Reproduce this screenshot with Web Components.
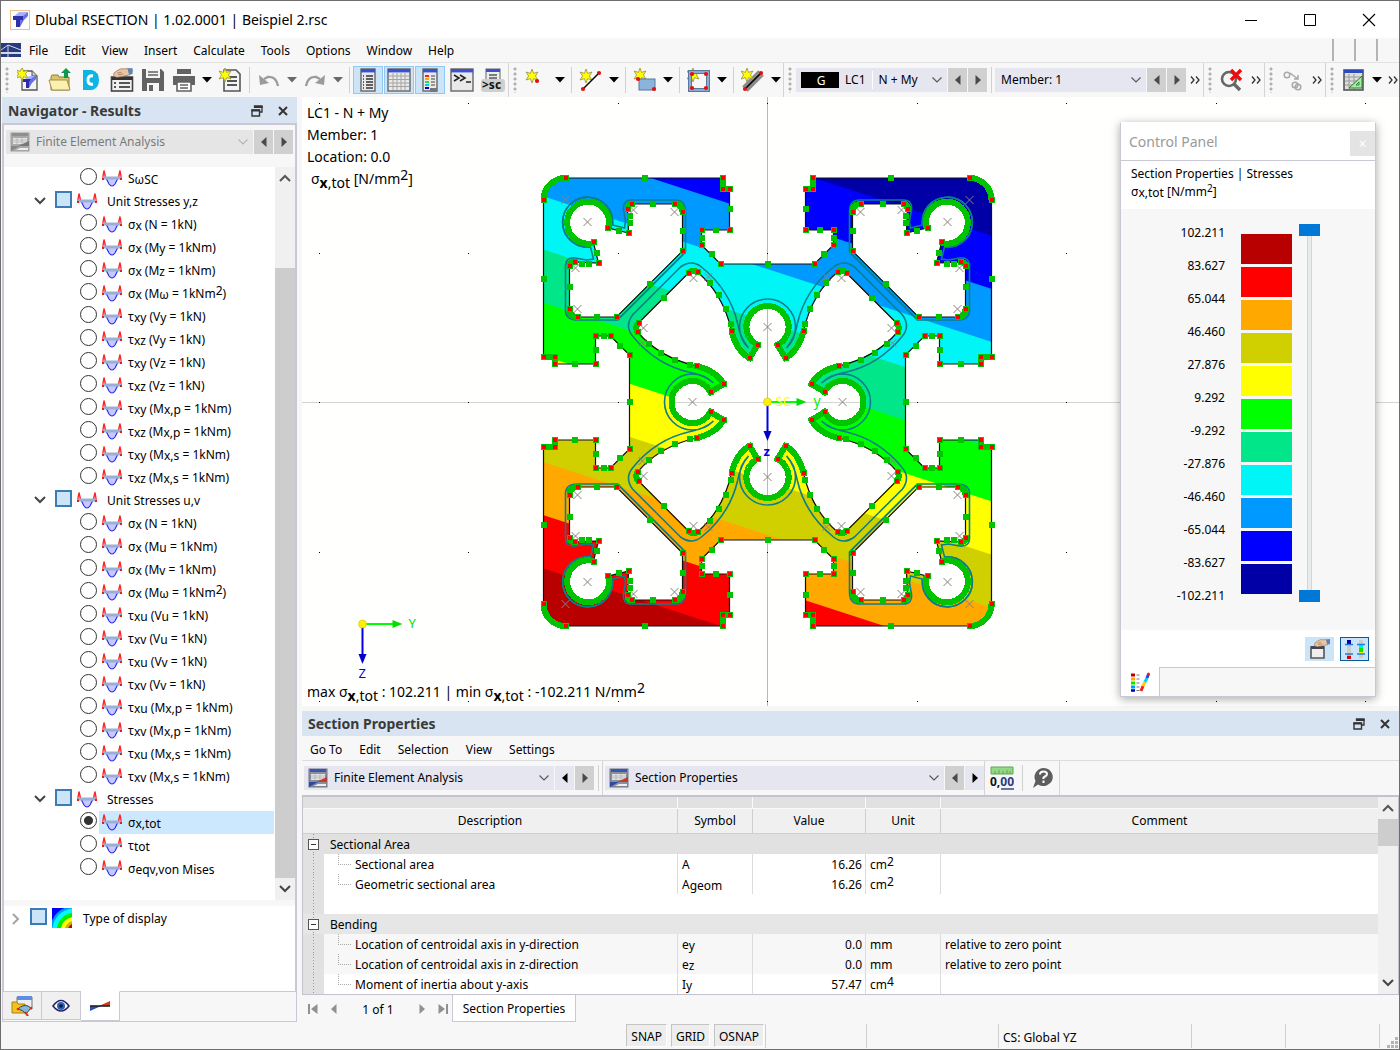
<!DOCTYPE html>
<html lang="en">
<head>
<meta charset="utf-8">
<title>Dlubal RSECTION</title>
<style>
html, body { margin: 0; height: 100%; }
body { font: 12px/16px "Noto Sans", "Open Sans", sans-serif; color: #000; background: #f7f7f7; }
</style>
</head>
<body>
<app-window></app-window>
<script>
const BASE = `
*, *::before { box-sizing: border-box; }
button, select, input { font: inherit; color: inherit; margin: 0; }
button { background: none; border: 0; padding: 0; white-space: nowrap; }
sub, sup { font-size: 12px; line-height: 0; }
sub { vertical-align: -2px; }
sup { vertical-align: 3px; }
`;
function define(name, css, render) {
  customElements.define(name, class extends HTMLElement {
    connectedCallback() {
      if (this.shadowRoot) return;
      const root = this.attachShadow({ mode: 'open' });
      root.innerHTML = `<style>${BASE}${css}</style>` + render(this);
    }
  });
}

/* ---------- icons ---------- */
const STAR = (x, y) => `<path transform="translate(${x} ${y})" d="M0-7 1.6-2.6 6-4 3.4 0 6 4 1.6 2.6 0 7-1.6 2.6-6 4-3.4 0-6-4-1.6-2.6z" fill="#ff0" stroke="#a09a4a" stroke-width=".9"/>`;
const DOT = (x, y) => `<circle cx="${x}" cy="${y}" r="2.1" fill="#e80c0c"/>`;
const PAGE = `<path d="M5 3h10l5 5v14H5z" fill="#f4f4f4" stroke="#555" stroke-width="1.3"/><path d="M15 3v5h5" fill="#ccc" stroke="#555"/>`;
const WIN = (x, w) => `<rect x="${x}" y="1" width="${w}" height="22" fill="#e9e9e9" stroke="#666" stroke-width="1.4"/><rect x="${x}" y="1" width="${w}" height="3.4" fill="#3d50cf"/>`;
const HAND = `<path d="M1 10V6l4-3 4-2h6l4-1 4 3-3 5-5 1-4 1-6 1z" fill="#e9c5a4" stroke="#8d6a50" stroke-width=".8"/><path d="M5 6l5-1M6 8l6-1" stroke="#8d6a50" stroke-width=".8"/><path d="M17 1l6-1v7l-4 1z" fill="#5c84b8"/>`;
const FEA = g => `<rect x="1" y="1" width="18" height="18" fill="${g ? '#a9a9a9' : '#8a8f9a'}" stroke="${g ? '#a0a0a0' : '#707684'}"/><rect x="2" y="1" width="16" height="3" fill="${g ? '#8f8f8f' : '#3956b5'}"/><path d="M3 6h14v6H3z" fill="#e6e6e6"/><path d="M3 8h14M3 10h14M7 6v6M12 6v6" stroke="#aaa" stroke-width=".7"/><path d="M8 14l11-5v5z" fill="${g ? '#777' : '#c63a2c'}"/><path d="M1 14h9l-9 5z" fill="${g ? '#888' : '#2d49a8'}"/><path d="M10 16h8v2H6z" fill="#eee"/>`;
const ICONS = {
  app: [20, 20, `<rect x=".5" y=".5" width="19" height="19" fill="#fff" stroke="#efc08a"/><path d="M3 7h11l4-5H9z" fill="#aab0ff"/><path d="M3 6h10v4h-3v7H6v-7H3z" fill="#2f31a8"/><path d="M13 6l5-4v4l-4 4h-1zM10 10h4l-4 7z" fill="#6c72e6"/>`],
  mdi: [20, 14, `<path d="M0 0h20v14H0z" fill="#273a7c"/><path d="M0 10h20" stroke="#fff" stroke-width="1.6"/><path d="M0 7l7-5 13 5M7 2v12" stroke="#cfd6ef" fill="none"/>`],
  min: [12, 12, `<path d="M0 6.5h12" stroke="#000"/>`],
  max: [12, 12, `<path d="M.5.5h11v11H.5z" fill="none" stroke="#000"/>`],
  close: [14, 14, `<path d="M1 1l12 12M13 1L1 13" stroke="#000" stroke-width="1.1"/>`],
  restore: [12, 12, `<path d="M3.5 2.5V1h7.5v6H9" fill="none" stroke="#333" stroke-width="1.3"/><path d="M3 1h8.6v2H3z" fill="#333"/><path d="M1 5h7.5v6H1z" fill="none" stroke="#333" stroke-width="1.4"/><path d="M.4 4.5h8.7v2H.4z" fill="#333"/>`],
  x: [10, 10, `<path d="M1 1l8 8M9 1L1 9" stroke="#333" stroke-width="2"/>`],
  new: [24, 24, PAGE + STAR(5, 6) + `<path d="M6 12h8l5-4h-6z" fill="#a7adff"/><path d="M6 11h8v3h-2v6H9v-6H6z" fill="#2b2da6"/><path d="M14 11l5-4v4l-4 4-3 5v-6z" fill="#6a70e4"/>`],
  open: [24, 24, `<path d="M3 9l1-2h6l1 2h10v13H3z" fill="#d9c46a" stroke="#8d7f3a"/><path d="M1 12h18l3 10H4z" fill="#faf0b0" stroke="#a3924a"/><path d="M18 0l5 5h-3v5h-4V5h-3z" fill="#0a9a50"/>`],
  center: [20, 22, `<path d="M2 1h9q7 2 7 10t-7 10H2z" fill="#0cb5e6"/><path d="M12 7q-5-1-5 4t5 4" fill="none" stroke="#fff" stroke-width="3"/>`],
  props: [24, 24, `<rect x="1.500" y="9" width="21" height="14" fill="#f0f0f0" stroke="#444" stroke-width="1.6"/><path d="M2 9h20v3H2z" fill="#333"/><path d="M4 15h2M4 19h2M9 15h11M9 19h11" stroke="#555" stroke-width="2"/><g transform="translate(3 0)scale(.85)">${HAND}</g>`],
  save: [24, 24, `<path d="M1 1h19l3 3v19H1z" fill="#626262"/><path d="M5 1h14v9H5z" fill="#f5f5f5"/><path d="M7 4h10M7 7h10" stroke="#626262" stroke-width="1.6"/><path d="M6 15h12v8H6z" fill="#f5f5f5"/><path d="M8 17h4v6H8z" fill="#626262"/>`],
  print: [24, 24, `<path d="M5 1h14v5H5zM1 8h22v9h-4v-3H5v3H1z" fill="#626262"/><path d="M5 14h14v9H5z" fill="#fff" stroke="#626262" stroke-width="1.6"/><path d="M8 17h8M8 20h8" stroke="#626262" stroke-width="1.4"/>`],
  report: [24, 24, `<path d="M6 2h12l4 4v17H6z" fill="#f4f4f4" stroke="#555" stroke-width="1.6"/><path d="M9 9h10M9 13h10M9 17h10" stroke="#555" stroke-width="1.8"/>` + STAR(7, 7)],
  undo: [22, 16, `<path d="M20 14Q18 4 10 5L6 7" fill="none" stroke="#9b9b9b" stroke-width="2.4"/><path d="M1 3l1 10 9-2z" fill="#9b9b9b"/>`],
  redo: [22, 16, `<path d="M2 14Q4 4 12 5l4 2" fill="none" stroke="#9b9b9b" stroke-width="2.4"/><path d="M21 3l-1 10-9-2z" fill="#9b9b9b"/>`],
  nav: [24, 24, WIN(5, 14) + `<path d="M10 8h7M10 11h7M10 14h7M10 17h7M10 20h7" stroke="#333" stroke-width="1.4"/><path d="M7 8h1M7 11h1M7 14h1M7 17h1M7 20h1" stroke="#333" stroke-width="1.4"/>`],
  table: [24, 24, WIN(1, 22) + `<path d="M2 8h20M2 11.500h20M2 15h20M2 18.500h20M6 5v17M10 5v17M14 5v17M18 5v17" stroke="#a4a4a4"/>`],
  panel: [24, 24, WIN(5, 14) + `<path d="M7 8h4" stroke="#e22" stroke-width="2"/><path d="M7 11h4" stroke="#fa0" stroke-width="2"/><path d="M7 14h4" stroke="#3d3" stroke-width="2"/><path d="M7 17h4" stroke="#0cf" stroke-width="2"/><path d="M7 20h4" stroke="#00b" stroke-width="2"/><path d="M13 8h4M13 11h4M13 14h4M13 17h4" stroke="#444"/><path d="M12 20h7v4h-7z" fill="#777"/>`],
  console: [24, 24, WIN(1, 22) + `<path d="M4 7l5 3-5 3M10 7l5 3-5 3M16 14h5" fill="none" stroke="#222" stroke-width="1.6"/>`],
  script: [24, 24, `<rect x="5" y="1" width="14" height="12" fill="#eee" stroke="#666"/><rect x="5" y="1" width="14" height="3" fill="#3d50cf"/><path d="M8 7h8M8 10h8" stroke="#555" stroke-width="1.4"/><rect x="0" y="11" width="24" height="13" rx="3" fill="#cfcfcf"/><text x="1" y="21" font-size="12" font-weight="bold" font-family="Noto Sans" fill="#111">&gt;sc</text>`],
  point: [24, 24, STAR(7, 8) + DOT(12, 13)],
  line: [24, 24, STAR(7, 8) + `<path d="M4 21L20 5" stroke="#000" stroke-width="1.4"/>` + DOT(4, 21) + DOT(20, 5)],
  surface: [24, 24, STAR(7, 7) + `<rect x="6" y="11" width="16" height="11" fill="#8ab4dc" stroke="#56789c"/>` + DOT(5, 11) + DOT(21, 21)],
  opening: [24, 24, STAR(6, 7) + `<path d="M3 4h18v18H3z" fill="none" stroke="#56789c" stroke-width="4"/><path d="M3 4h18v18H3z" fill="none" stroke="#9bbcdf" stroke-width="1.6"/>` + DOT(5, 6) + DOT(19, 6) + DOT(5, 20) + DOT(19, 20)],
  element: [24, 24, `<path d="M4 21L20 5" stroke="#8a8a8a" stroke-width="8"/>` + STAR(6, 7) + `<path d="M4 21L20 5" stroke="#000" stroke-width="1.6"/>` + DOT(4, 21) + DOT(20, 5)],
  find: [24, 24, `<circle cx="9" cy="11" r="7" fill="none" stroke="#666" stroke-width="2.6"/><path d="M14 16l6 6" stroke="#666" stroke-width="3.4"/><path d="M11 2l10 10M21 2L11 12" stroke="#f00a0a" stroke-width="3.4"/>`],
  snap: [24, 24, `<g fill="none" stroke="#a9a9a9" stroke-width="1.5"><circle cx="6" cy="7" r="2.800"/><circle cx="14" cy="17" r="2.800"/><circle cx="17" cy="19" r="2.800"/><path d="M9 5l8 6M17 7v4h-4"/></g>`],
  calc: [24, 24, `<rect x="2" y="2" width="19" height="20" fill="#ddd" stroke="#555" stroke-width="1.6"/><path d="M2 2h19v3H2z" fill="#2b4bb8"/><path d="M3 9h17M3 13h17M3 17h17M7 6v15M12 6v15" stroke="#999"/><path d="M7 20L20 8v12z" fill="#9ff09f" stroke="#357a35"/><path d="M14 17l3-3v3z" fill="#f5fff5" stroke="#357a35"/>`],
  caret: [10, 6, `<path d="M0 0h10L5 5.500z"/>`],
  caretg: [10, 6, `<path d="M0 0h10L5 5.500z" fill="#6a6a6a"/>`],
  left: [6, 10, `<path d="M5.500 0v10L0 5z" fill="currentColor"/>`],
  right: [6, 10, `<path d="M.5 0v10L6 5z" fill="currentColor"/>`],
  first: [10, 10, `<path d="M0 0h2v10H0zM9.500 0v10L3 5z" fill="#909090"/>`],
  last: [10, 10, `<path d="M8 0h2v10H8zM.5 0v10L7 5z" fill="#909090"/>`],
  more: [10, 8, `<path d="M1 .5L4 4 1 7.500M6 .5L9 4 6 7.500" fill="none" stroke="#333" stroke-width="1.3"/>`],
  down: [10, 6, `<path d="M.5.5L5 5 9.500.5" fill="none" stroke="currentColor" stroke-width="1.1"/>`],
  tdown: [12, 8, `<path d="M1 1l5 5 5-5" fill="none" stroke="#444" stroke-width="2"/>`],
  tup: [12, 8, `<path d="M1 7l5-5 5 5" fill="none" stroke="#555" stroke-width="2"/>`],
  tright: [8, 12, `<path d="M1 1l5 5-5 5" fill="none" stroke="#a4a4a4" stroke-width="2"/>`],
  fea: [20, 20, FEA(false)],
  feag: [20, 20, FEA(true)],
  stress: [20, 18, `<path d="M3 8h14l-3 4-2 4-2 1-2-1-2-4z" fill="#c6c8ff"/><path d="M4.500 10l2.500 5q3 4 6 0l2.500-5" fill="none" stroke="#2a2af0" stroke-width="1.200"/><path d="M1 9V7L2 1.500 3.500 8M19 9V7l-1-5.500L16.500 8" fill="#ffb0b0" stroke="#f22" stroke-width="1.3"/><path d="M1 9h18" stroke="#98b0d4" stroke-width="3"/><path d="M0 10h2M18 10h2" stroke="#e02020" stroke-width="2"/>`],
  display: [20, 20, `<path d="M0 0h20v20H0z" fill="#00f"/><circle cx="22" cy="22" r="24" fill="#0099ff"/><circle cx="22" cy="22" r="21.500" fill="#00f8f8"/><circle cx="22" cy="22" r="17" fill="#0e0"/><circle cx="22" cy="22" r="13" fill="#ff0"/><circle cx="22" cy="22" r="9" fill="#d0b000"/><circle cx="22" cy="22" r="6" fill="#c00"/>`],
  data: [22, 20, `<path d="M6 1h15v12H6z" fill="#eee" stroke="#777"/><path d="M6 0h15v4H6z" fill="#5b8de6"/><path d="M1 6h5l1 2h7v9H1z" fill="#f3c21c" stroke="#a98310"/><path d="M7 13q5-5 10-3l3 2-5 6q-3-4-8-5z" fill="#7fb8dc" stroke="#345"/><path d="M14 16l3 4" stroke="#e02a10" stroke-width="2"/><circle cx="7" cy="13" r="1.300" fill="#e02a10"/><circle cx="20" cy="12" r="1.300" fill="#e02a10"/>`],
  eye: [18, 14, `<path d="M1 7q8-11 16 0-8 10-16 0z" fill="#fff" stroke="#26225e" stroke-width="1.6"/><circle cx="9" cy="7" r="4" fill="#2c60b8"/><circle cx="9" cy="7" r="1.800" fill="#0b1440"/>`],
  result: [20, 10, `<path d="M0 5h11L0 10z" fill="#2a4cb4"/><path d="M20 5H9l11-5z" fill="#d33a1c"/><path d="M0 5h20" stroke="#222" stroke-width="1.6"/>`],
  decimals: [24, 24, `<path d="M1 1h22v7H1z" fill="#94d886" stroke="#62a556"/><path d="M5 8V5M9 8V4M13 8V5M17 8V4M20 8V5" stroke="#62a556"/><text x="0" y="20" font-size="12" font-weight="bold" font-family="Noto Sans" fill="#111">0,<tspan fill="#2b3a80">00</tspan></text><path d="M11 23h13" stroke="#2b3a80" stroke-width="1.4"/>`],
  help: [22, 22, `<path d="M11 1a9.500 9 0 11-5 16.500L1 21l2.500-7A9.500 9 0 0111 1z" fill="#5d5d5d"/><path d="M8 7.500q0-3 3.500-3t3.500 2.500q0 1.500-2 2.500t-1.500 2.500M11.500 13.500v2.500" fill="none" stroke="#fff" stroke-width="2"/>`],
  phand: [20, 20, `<path d="M1 8h13v11H1z" fill="#eee" stroke="#555" stroke-width="1.6"/><path d="M1 7h13v3H1z" fill="#445"/><g transform="translate(4 0)scale(.7)">${HAND}</g>`],
  ranges: [20, 20, `<path d="M2 1h4v18H2zM14 1h4v18h-4z" fill="#ccc"/><path d="M2 1h4v4H2z" fill="#00a"/><path d="M2 15h4v2H2z" fill="#fa0"/><path d="M2 17h4v3H2z" fill="#d00"/><path d="M14 6h4v3h-4z" fill="#00f0f0"/><path d="M14 9h4v4h-4z" fill="#0e0"/><path d="M14 13h4v2h-4z" fill="#ee0"/><path d="M0 5.500h8M0 15h8M12 5.500h8M12 15h8" stroke="#1a80e0" stroke-width="1.4"/>`],
  colors: [20, 20, `<path d="M1 3h4" stroke="#b00" stroke-width="3"/><path d="M1 7h4" stroke="#fa0" stroke-width="3"/><path d="M1 11h4" stroke="#0e0" stroke-width="3"/><path d="M1 15h4" stroke="#09f" stroke-width="3"/><path d="M1 18.500h4" stroke="#00a" stroke-width="2.500"/><path d="M6.500 3h3M6.500 7h3M6.500 11h3M6.500 15h3M6.500 18.500h3" stroke="#777"/><path d="M11 19l2-5" stroke="#e22" stroke-width="3"/><path d="M13 14l2-4" stroke="#fc0" stroke-width="3"/><path d="M15 10l2-4" stroke="#0cf" stroke-width="3"/><path d="M17 6l1.500-4" stroke="#24c" stroke-width="3"/><circle cx="18.500" cy="2" r="1.500" fill="#e22"/>`],
  grip: [12, 12, `<path d="M9 0h3v3H9zM5 4h3v3H5zM9 4h3v3H9zM1 8h3v3H1zM5 8h3v3H5zM9 8h3v3H9z" fill="#b4b4b4"/>`]
};
define('ui-icon', ':host { display: block; flex: none; } svg { display: block; overflow: hidden; }', el => {
  const [w, h, body] = ICONS[el.getAttribute('name')];
  return `<svg width="${w}" height="${h}" viewBox="0 0 ${w} ${h}" aria-hidden="true">${body}</svg>`;
});
const ico = n => `<ui-icon name="${n}"></ui-icon>`;

/* ---------- toolbar pieces ---------- */
define('tool-button', `
:host { display: block; flex: none; width: 31px; height: 28px; }
:host([kind=caret]) { width: 15px; }
:host([kind=more]) { width: 17px; }
button { width: 100%; height: 100%; display: grid; place-items: center; }
:host([active]) button { width: 30px; background: #cce4f7; border: 1px solid #90c8f6; }
`, el => `<button type="button" aria-label="${el.getAttribute('icon')}">${ico(el.getAttribute('icon'))}</button>`);
define('tool-separator', `:host { display: block; flex: none; width: 8px; height: 26px; } i { display: block; width: 1px; height: 100%; margin-left: 4px; background: #d0d0d0; }`, () => '<i></i>');
define('tool-group', `
:host { display: flex; align-items: center; height: 34px; border-right: 1px solid #d4d4d4; }
i { flex: none; width: 12px; height: 26px; background: radial-gradient(circle at 6px 2px, #b0b0b0 1px, transparent 2px) 0 0 / 12px 5px; }
`, () => '<i></i><slot></slot>');

/* Drop-down followed by the previous and next buttons */
define('step-select', `
:host { display: flex; gap: 1px; height: 24px; color: #000; min-width: 0; }
.box { flex: 1; min-width: 0; display: flex; align-items: center; background: #e6e6f1; position: relative; }
:host([off]) .box { background: #e5e5e5; color: #7a7a7a; }
::slotted(*) { flex: none; }
::slotted(ui-icon) { margin-left: 4px; }
select { appearance: none; flex: 1; min-width: 0; height: 24px; border: 0; background: none; padding: 0 22px 0 6px; opacity: 1; color: inherit; }
.chev { position: absolute; right: 5px; top: 9px; color: #555; pointer-events: none; }
:host([off]) .chev { color: #b5b5b5; }
button { flex: none; width: 19px; height: 24px; display: grid; place-items: center; background: #d0d0d0; color: #4a4a4a; }
button.on { background: #e6e6f1; color: #000; }
`, el => `<div class="box"><slot></slot><select aria-label="${el.getAttribute('label')}" ${el.hasAttribute('off') ? 'disabled' : ''}><option>${el.getAttribute('value')}</option></select><span class="chev">${ico('down')}</span></div>
<button type="button" class="${el.getAttribute('on') === 'prev' ? 'on' : ''}" aria-label="Previous">${ico('left')}</button><button type="button" class="${el.getAttribute('on') === 'next' ? 'on' : ''}" aria-label="Next">${ico('right')}</button>`);

define('panel-header', `
:host { display: flex; align-items: center; height: 26px; padding: 1px 6px 0 6px; background: #d8e4f1; color: #3a3a3a; gap: 10px; }
h2 { flex: 1; margin: 0; font-size: 14px; font-weight: 700; line-height: 20px; }
button { width: 16px; height: 20px; display: grid; place-items: center; }
`, el => `<h2><slot></slot></h2><button type="button" aria-label="Float">${ico('restore')}</button><button type="button" aria-label="Close">${ico('x')}</button>`);

define('menu-row', `
:host { display: flex; align-items: center; }
button { padding: 2px 8px 0; height: 24px; }
`, el => el.getAttribute('items').split('|').map(t => `<button type="button">${t}</button>`).join(''));

define('scroll-bar', `
:host { display: flex; flex-direction: column; width: 20px; background: #f0f0f0; }
span { flex: none; height: 22px; display: grid; place-items: center; }
i { display: block; background: #cdcdcd; height: var(--thumb); margin-top: var(--before, 0px); margin-bottom: auto; }
`, () => `<span>${ico('tup')}</span><i></i><span>${ico('tdown')}</span>`);

/* ---------- navigator ---------- */
const K = (a, s, l, ls, u) => `${a}<sub>${s}</sub> (${l}${ls ? `<sub>${ls}</sub>` : ''} = ${u})`;
const unit = (p, q) => [
  K('σ', 'x', 'N', '', '1kN'), K('σ', 'x', 'M', p, '1kNm'), K('σ', 'x', 'M', q, '1kNm'), K('σ', 'x', 'M', 'ω', '1kNm<sup>2</sup>'),
  K('τ', 'x' + p, 'V', p, '1kN'), K('τ', 'x' + q, 'V', p, '1kN'), K('τ', 'x' + p, 'V', q, '1kN'), K('τ', 'x' + q, 'V', q, '1kN'),
  K('τ', 'x' + p, 'M', 'x,p', '1kNm'), K('τ', 'x' + q, 'M', 'x,p', '1kNm'), K('τ', 'x' + p, 'M', 'x,s', '1kNm'), K('τ', 'x' + q, 'M', 'x,s', '1kNm')];
define('result-tree', `
:host { display: flex; flex-direction: column; background: #fff; overflow: hidden; }
.row { display: flex; align-items: center; height: 23px; }
.leaf { padding-left: 76px; gap: 2px; }
.group { padding: 0 0 0 30px; gap: 5px; }
.group ui-icon:first-child { margin: 0 4px 2px 0; }
.top { padding-left: 8px; gap: 5px; height: 23px; }
.top ui-icon:first-child { margin-right: 5px; }
input { appearance: none; flex: none; width: 17px; height: 17px; margin-bottom: 4px; }
input[type=radio] { border: 1px solid #333; border-radius: 50%; background: #fff; }
input[type=radio]:checked { background: radial-gradient(circle, #333 0 4px, #fff 5px); }
input[type=checkbox] { background: #cce4f7; border: 2px solid #3b7cb8; }
.cap { display: flex; align-items: center; gap: 6px; height: 23px; padding-left: 3px; flex: 1; white-space: nowrap; }
.row .cap ui-icon { margin-bottom: 2px; }
.sel { background: #cce8ff; }
.group .cap, .top .cap { padding-left: 0; }
sub { vertical-align: -1px; }
`, el => {
  const leaf = (t, on) => `<label class="row leaf"><input type="radio" name="result"${on ? ' checked' : ''}><span class="cap${on ? ' sel' : ''}">${ico('stress')}<span class="t">${t}</span></span></label>`;
  const group = t => `<label class="row group">${ico('tdown')}<input type="checkbox"><span class="cap">${ico('stress')}<span>${t}</span></span></label>`;
  if (el.hasAttribute('display')) return `<label class="row top">${ico('tright')}<input type="checkbox"><span class="cap">${ico('display')}<span>Type of display</span></span></label>`;
  return leaf('S<sub>ωSC</sub>') + group('Unit Stresses y,z') + unit('y', 'z').map(t => leaf(t)).join('') +
    group('Unit Stresses u,v') + unit('u', 'v').map(t => leaf(t)).join('') +
    group('Stresses') + leaf('σ<sub>x,tot</sub>', 1) + leaf('τ<sub>tot</sub>') + leaf('σ<sub>eqv,von Mises</sub>');
});
define('navigator-panel', `
:host { display: flex; flex-direction: column; width: 295px; flex: none; }
.frame { flex: 1; min-height: 0; display: flex; flex-direction: column; border: solid #c9c8d4; border-width: 2px 2px 0 2px; }
step-select { margin: 5px 2px 13px 2px; }
.tree { flex: 1; min-height: 0; display: flex; background: #fff; overflow: hidden; }
.tree result-tree { flex: 1; }
scroll-bar { --thumb: 612px; --before: 79px; margin-left: 1px; }
.second { background: #fff; margin-top: 6px; padding-top: 1px; height: 85px; }
.tabs { display: flex; height: 31px; border: 1px solid #c9c8d4; border-top: 0; }
.tabs button { width: 39px; height: 29px; display: grid; place-items: center; background: #f0f0f0; border: 1px solid #c9c8d4; border-left-width: 0; }
.tabs button.on { height: 30px; background: #fff; border-top-color: #fff; }
.tabs i { flex: 1; border-top: 1px solid #c9c8d4; }
`, () => `<panel-header>Navigator - Results</panel-header>
<div class="frame"><step-select off label="Analysis" value="Finite Element Analysis">${ico('feag')}</step-select>
<div class="tree"><result-tree></result-tree><scroll-bar></scroll-bar></div>
<div class="second"><result-tree display></result-tree></div></div>
<div class="tabs"><button type="button" aria-label="Data">${ico('data')}</button><button type="button" aria-label="Display">${ico('eye')}</button><button type="button" class="on" aria-label="Results">${ico('result')}</button><i></i></div>`);

/* ---------- stress plot ---------- */
const COLORS = ['#b90000', '#ff0000', '#ffa800', '#d0d000', '#ffff00', '#00ff00', '#00e688', '#00f6f6', '#0099ff', '#0000ff', '#0000a6'];
const P = (...pts) => pts;
const OUTER = [['L', -138, -47], ['L', -157, -66], ['L', -172, -66], ['L', -172, -38], ['L', -213, -38], ['L', -213, -45], ['L', -224, -45], ['L', -224, -202], ['A', 22, 0, 1, -202, -224], ['L', -45, -224], ['L', -45, -213], ['L', -38, -213], ['L', -38, -172], ['L', -66, -172], ['L', -66, -157], ['L', -47, -138], ['L', 0, -138]];
const CORNER = [['M', -174, -159], ['A', 21, 1, 1, -159, -174], ['L', -139, -169], ['L', -140, -193], ['Q', -140, -198, -136, -198], ['L', -93, -198], ['Q', -85, -198, -85, -190], ['L', -85, -151], ['L', -151, -85], ['L', -190, -85], ['Q', -198, -85, -198, -93], ['L', -198, -136], ['Q', -198, -140, -193, -140], ['L', -169, -139], ['Z']];
const CORE = [['L', -44, -18], ['C', -48, -26, -58, -33, -71, -36], ['C', -98, -42, -118, -56, -130, -70], ['Q', -133, -75, -129, -79], ['L', -79, -129], ['Q', -75, -133, -70, -130], ['C', -56, -118, -42, -98, -36, -71], ['C', -33, -58, -26, -48, -18, -44], ['L', -10, -57], ['A', 21, 1, 1, 10, -57]];
const rot = (x, y, k) => { for (; k--;) [x, y] = [-y, x]; return x + ' ' + y; };
const seg = (cmds, k) => cmds.map(c => {
  const [o, ...n] = c;
  if (o === 'A') return `A${n[0]} ${n[0]} 0 ${n[1]} ${n[2]} ${rot(n[3], n[4], k)}`;
  let s = o;
  for (let i = 0; i < n.length; i += 2) s += rot(n[i], n[i + 1], k) + ' ';
  return s;
}).join('');
const all = cmds => [0, 1, 2, 3].map(k => seg(cmds, k)).join('');
const SECTION = `M-138 0${all(OUTER)}Z${all(CORNER)}M-57 -10${all(CORE)}Z`;
const THICK = 'M-224-202A22 22 0 0 1-202-224M-45-224v11h7M-174-159A21 21 0 1 1-159-174M-140-193Q-140-198-136-198M-93-198Q-85-198-85-190M-79-129Q-75-133-70-130M-36-71C-33-58-26-48-18-44L-10-57A21 21 0 0 1-19-66';
const TEAL = 'M-177-155A25 25 0 1 1-155-177L-143-174L-142-181L-144-192Q-145-202-136-202H-92Q-82-202-82-190V-150L-150-82';
const TEAL2 = 'M-19-54Q-28-63-28-75A28 28 0 0 1 0-103M-19-54C-25-61-28-68-30-79C-36-105-50-122-66-135Q-76-143-87-135L-111-111';
const RED = P([-47, -138], [-66, -157], [-66, -172], [-38, -172], [-38, -213], [-45, -213], [-45, -224], [-202, -224], [-160, -174], [-139, -169], [-140, -193], [-136, -198], [-93, -198], [-85, -190], [-85, -151], [-79, -129], [-70, -130], [-36, -71], [-18, -44], [-10, -57]);
const GREEN = P([0, -138], [-56, -148], [-66, -164], [-52, -172], [-38, -193], [-123, -224], [-115, -198], [-138, -186], [-138, -179], [-149, -171], [-85, -171], [-118, -118], [-104, -104], [-58, -119], [-49, -107], [-42, -93], [-37, -78]);
const CROSS = P([-180, -180], [0, -75], [-93, -190], [-134, -192], [-74, -124], [-202, -202], [-59, -125]);
const eight = pts => {
  const seen = new Map();
  for (const [x, y] of pts) for (const [a, b] of [[x, y], [y, x]]) for (const s of [1, -1]) for (const t of [1, -1]) seen.set([a * s + 0, b * t + 0].join(), [a * s, b * t]);
  return [...seen.values()];
};
const DIHEDRAL = [0, 90, 180, 270].flatMap(r => [`rotate(${r})`, `rotate(${r}) matrix(0 1 1 0 0 0)`]);

define('stress-view', `
:host { display: block; position: relative; flex: 1; min-height: 0; background: #fffffd; overflow: hidden; font-size: 14px; }
svg { display: block; width: 100%; height: 100%; }
.over { position: absolute; left: 5px; white-space: nowrap; }
.head { top: 5px; line-height: 22px; }
.foot { bottom: 3px; line-height: 22px; }
.head div:last-child { padding-left: 4px; }
sub, sup { font-size: 14px; }
sub { vertical-align: -4px; }
sup { vertical-align: 4px; }
.ax { font-size: 13px; }
`, () => {
  const step = 53.15, lim = i => i === 0 ? 400 : (5.5 - i) * step, k = 0.325;
  const bands = COLORS.map((c, i) => { const a = lim(i); return `<path fill="${c}" d="M-240 ${a - 240 * k}L240 ${a + 240 * k}V-400H-240Z"/>`; }).join('');
  let dots = '';
  for (let i = -3; i < 5; i++) for (let j = -2; j < 3; j++) dots += `<path d="M${Math.round(i * 149.5) - .5} ${Math.round(j * 149.5)}h1v1h-1z"/>`;
  const axes = (l, s) => `<path d="M0 0h${l - 8}" stroke="#00ff00" stroke-width="2"/><path d="M${l} 0l-10-4v8z" fill="#00e000"/><path d="M0 0v${l - 8}" stroke="#0000e8" stroke-width="2"/><path d="M0 ${l}l-4-10h8z" fill="#0000c8"/><circle r="4" fill="#ffef00" stroke="#c8b800" stroke-width=".5"/>`;
  return `<svg aria-label="Stress distribution">
<defs><clipPath id="sec"><path clip-rule="evenodd" d="${SECTION}"/></clipPath></defs>
<g transform="translate(465.5 305)">
<path d="M0-400V2000" stroke="#b8b8b8"/><path d="M-900 .5H2000" stroke="#d4d4d4" stroke-width="1"/>
<g fill="#000" shape-rendering="crispEdges">${dots}</g>
<g clip-path="url(#sec)">${bands}</g>
<path d="${SECTION}" fill="none" stroke="#111" stroke-width="1.2"/>
<g stroke="#0a7f8a" stroke-width="1.6" fill="none">${DIHEDRAL.map(t => `<path transform="${t}" d="${TEAL}${TEAL2}"/>`).join('')}</g>
<path d="${eight(CROSS).map(([x, y]) => `M${x - 4} ${y - 4}l8 8m0-8l-8 8`).join('')}" stroke="#8a8080" fill="none"/>
<g stroke="#00c400" stroke-width="6" fill="none" shape-rendering="crispEdges">${DIHEDRAL.map(t => `<path transform="${t}" d="${THICK}M-19-66A21 21 0 0 1 0-96"/>`).join('')}</g>
<g fill="#00c400" shape-rendering="crispEdges">${eight(GREEN).map(([x, y]) => `<path d="M${x - 3} ${y - 3}h6v6h-6z"/>`).join('')}</g>
<g fill="#ff0000" stroke="#00c400" shape-rendering="crispEdges">${eight(RED).map(([x, y]) => `<path d="M${x - 2.5} ${y - 2.5}h5v5h-5z"/>`).join('')}</g>
${axes(39)}
<g class="ax"><text x="8" y="4" fill="#ffff00">SC</text><text x="46" y="4" fill="#00f000" font-size="14">y</text><text x="-4" y="54" fill="#0000e8" font-weight="bold">z</text></g>
<g transform="translate(-405 222)">${axes(40)}<g class="ax"><text x="46" y="4" fill="#00e000">Y</text><text x="-4" y="54" fill="#0000e8">Z</text></g></g>
</g></svg>
<div class="over head"><div>LC1 - N + My</div><div>Member: 1</div><div>Location: 0.0</div><div>σ<sub><b>x</b>,tot</sub> [N/mm<sup>2</sup>]</div></div>
<div class="over foot">max σ<sub><b>x</b>,tot</sub> : 102.211 | min σ<sub><b>x</b>,tot</sub> : -102.211 N/mm<sup>2</sup></div>`;
});

define('control-panel', `
:host { display: flex; flex-direction: column; width: 256px; background: #fff; border: 1px solid #c9c8d4; border-top-color: #fff; box-shadow: 0 2px 9px rgba(0,0,0,.35); }
header { height: 38px; display: flex; align-items: center; justify-content: space-between; padding-left: 8px; color: #9a9a9a; font-size: 14px; border-bottom: 1px solid #c9c8d4; }
header button { width: 25px; height: 25px; margin-top: 4px; background: #e4e4e4; color: #fff; line-height: 20px; }
.name { padding: 4px 10px 8px; height: 48px; line-height: 18px; }
.name sup { font-size: 10px; vertical-align: 4px; }
.name sub { vertical-align: -1px; }
.scale { background: #f7f7f7; height: 421px; display: grid; grid-template-columns: 104px 51px 21px; gap: 0 7px; padding-top: 16px; }
ol { list-style: none; margin: 0; padding: 0; text-align: right; }
ol li { height: 33px; line-height: 16px; }
.sw { padding-top: 9px; margin-left: 9px; width: 51px; }
.sw li { border-bottom: 3px solid #f7f7f7; }
.slide { display: grid; margin: -1px 0 0 9px; height: 378px; width: 21px; background: linear-gradient(90deg, transparent 8px, #d2d6d6 8px 9px, #e8ecec 9px 12px, #d2d6d6 12px 13px, transparent 13px); }
input { grid-area: 1 / 1; appearance: none; writing-mode: vertical-lr; width: 21px; height: 378px; background: none; pointer-events: none; }
input::-webkit-slider-runnable-track { background: none; width: 21px; height: 378px; }
input::-webkit-slider-thumb { appearance: none; width: 21px; height: 12px; background: #0078d7; pointer-events: auto; }
.acts { height: 37px; display: flex; justify-content: flex-end; align-items: center; gap: 6px; padding-right: 6px; }
.acts button { width: 29px; height: 24px; display: grid; place-items: center; background: #cce4f7; }
.acts button.on { border: 1px solid #0b5a9e; }
.tabs { display: flex; height: 29px; }
.tabs button { width: 38px; display: grid; place-items: center; }
.tabs i { flex: 1; background: #f7f7f7; border: solid #c9c8d4; border-width: 1px 0 0 1px; }
`, () => `<header>Control Panel<button type="button" aria-label="Close">×</button></header>
<div class="name">Section Properties | Stresses<br>σ<sub>x,tot</sub> [N/mm<sup>2</sup>]</div>
<div class="scale"><ol>${['102.211', '83.627', '65.044', '46.460', '27.876', '9.292', '-9.292', '-27.876', '-46.460', '-65.044', '-83.627', '-102.211'].map(t => `<li>${t}</li>`).join('')}</ol>
<ol class="sw">${COLORS.map(c => `<li style="background:${c}"></li>`).join('')}</ol>
<div class="slide"><input type="range" aria-label="Upper limit" min="0" max="100" value="0"><input type="range" aria-label="Lower limit" min="0" max="100" value="100"></div></div>
<div class="acts"><button type="button" aria-label="Options">${ico('phand')}</button><button type="button" class="on" aria-label="Ranges">${ico('ranges')}</button></div>
<div class="tabs"><button type="button" aria-label="Colors">${ico('colors')}</button><i></i></div>`);

/* ---------- properties table ---------- */
define('property-table', `
:host { display: flex; height: 200px; border: 1px solid #c3c2ce; border-top-width: 2px; background: #fff; overflow: hidden; }
.wrap { flex: 1; overflow: hidden; }
table { width: 100%; table-layout: fixed; border-collapse: separate; border-spacing: 0; }
th { font-weight: 400; height: 25px; background: #f0f0f0; border-right: 1px solid #cfcfcf; border-bottom: 1px solid #cfcfcf; padding: 0; }
.strip th { height: 12px; background: #e1e1e1; border-right-color: #fafafa; border-bottom-color: #fafafa; }
th:last-child, td:last-child { border-right: 0; }
td { height: 20px; padding: 2px 4px 0; border-right: 1px solid #dcdcdc; white-space: nowrap; line-height: 16px; }
td:first-child, .g td { background: #e1e1e1; border-right: 0; }
.g2 td { background: #e6e6e6; }
td:first-child { padding: 0; background-image: repeating-linear-gradient(#999 0 1px, transparent 1px 3px); background-size: 1px 100%; background-position: 10px 0; background-repeat: no-repeat; }
.g td + td { padding-left: 6px; }
.none td { border-right: 0; }
.alt td + td { background: #f7f7f7; }
td.d { padding-left: 31px; position: relative; }
td.d::before { content: ""; position: absolute; left: 14px; top: 0; width: 13px; height: 11px; border: dotted #aaa; border-width: 0 0 1px 1px; }
td.n { text-align: right; padding-right: 3px; }
.box { display: block; width: 11px; height: 11px; margin: 0 auto 0 5px; border: 1px solid #555; background: #fff linear-gradient(#333, #333) center / 5px 1px no-repeat; }
scroll-bar { --thumb: 27px; }
sub { vertical-align: -1px; }
`, () => {
  const group = (t, c) => `<tr class="g ${c}"><td><button type="button" class="box" aria-label="Collapse"></button></td><td colspan="5">${t}</td></tr>`;
  const row = (a, b, c, d, e, k) => `<tr class="${k || ''}"><td></td><td class="d">${a}</td><td>${b}</td><td class="n">${c}</td><td>${d}</td><td>${e}</td></tr>`;
  return `<div class="wrap"><table><colgroup><col style="width:21px"><col style="width:354px"><col style="width:75px"><col style="width:113px"><col style="width:75px"><col></colgroup>
<thead><tr class="strip"><th colspan="2"></th><th></th><th></th><th></th><th></th></tr>
<tr><th colspan="2">Description</th><th>Symbol</th><th>Value</th><th>Unit</th><th>Comment</th></tr></thead>
<tbody>${group('Sectional Area', '')}${row('Sectional area', 'A', '16.26', 'cm<sup>2</sup>', '')}${row('Geometric sectional area', 'A<sub>geom</sub>', '16.26', 'cm<sup>2</sup>', '')}
<tr class="none"><td></td><td></td><td></td><td></td><td></td><td></td></tr>
${group('Bending', 'g2')}${row('Location of centroidal axis in y-direction', 'e<sub>y</sub>', '0.0', 'mm', 'relative to zero point', 'alt')}${row('Location of centroidal axis in z-direction', 'e<sub>z</sub>', '0.0', 'mm', 'relative to zero point', 'alt')}${row('Moment of inertia about y-axis', 'I<sub>y</sub>', '57.47', 'cm<sup>4</sup>', '')}</tbody></table></div><scroll-bar></scroll-bar>`;
});
define('section-properties', `
:host { display: flex; flex-direction: column; margin-top: 5px; flex: none; }
panel-header { height: 25px; }
menu-row { height: 24px; gap: 1px; padding-top: 1px; }
.bar { display: flex; align-items: center; height: 35px; border-top: 1px solid #dcdcdc; }
.bar tool-button { width: 33px; }
.c1 { width: 290px; margin-left: 2px; }
.c2 { width: 379px; margin-left: 2px; }
.edge { width: 1px; height: 34px; background: #d4d4d4; }
.foot { display: flex; align-items: stretch; height: 27px; padding-left: 1px; }
.foot button { width: 22px; display: grid; place-items: center; color: #909090; }
.foot button.wide { width: 20px; }
.foot span { width: 66px; text-align: center; line-height: 29px; }
.foot .tab { width: 124px; height: 27px; margin-left: -1px; padding-top: 2px; color: #000; background: #fff; border: solid #c9c8d4; border-width: 0 1px 1px; }
`, () => `<panel-header>Section Properties</panel-header><menu-row items="Go To|Edit|Selection|View|Settings"></menu-row>
<div class="bar"><step-select class="c1" on="prev" label="Analysis" value="Finite Element Analysis">${ico('fea')}</step-select><tool-separator></tool-separator><i class="edge"></i><step-select class="c2" on="next" label="Table" value="Section Properties">${ico('fea')}</step-select><i class="edge"></i><tool-button icon="decimals"></tool-button><tool-separator></tool-separator><tool-button icon="help"></tool-button><i class="edge"></i></div>
<property-table></property-table>
<div class="foot"><button type="button" class="wide" aria-label="First">${ico('first')}</button><button type="button" aria-label="Previous">${ico('left')}</button><span>1 of 1</span><button type="button" aria-label="Next">${ico('right')}</button><button type="button" class="wide" aria-label="Last">${ico('last')}</button><button type="button" class="tab">Section Properties</button></div>`);

define('status-bar', `
:host { display: flex; align-items: center; height: 27px; flex: none; justify-content: flex-end; }
button { height: 23px; margin-right: 4px; padding: 2px 4px 0; background: #ededed; border: 1px solid #c4c4c4; border-right-color: #fff; border-bottom-color: #fff; }
button:last-of-type { margin-right: 1px; }
div { height: 24px; line-height: 27px; padding-left: 4px; border-left: 1px solid #d0d0d0; }
.a { width: 101px; } .b { width: 132px; } .c { width: 193px; } .d { width: 94px; } .e { width: 20px; padding: 13px 0 0 6px; }
`, () => `<button type="button">SNAP</button><button type="button">GRID</button><button type="button">OSNAP</button><div class="a"></div><div class="b"></div><div class="c">CS: Global YZ</div><div class="d"></div><div class="d"></div><div class="e">${ico('grip')}</div>`);

/* ---------- window ---------- */
const tb = (n, a) => `<tool-button icon="${n}"${a ? ' active' : ''}></tool-button>`;
const car = (n = 'caret') => `<tool-button kind="caret" icon="${n}"></tool-button>`;
const sep = '<tool-separator></tool-separator>';
const more = '<tool-button kind="more" icon="more"></tool-button>';
define('app-window', `
:host { display: flex; flex-direction: column; min-height: 100vh; height: 100vh; border: 1px solid #6e6e6e; background: #f7f7f7; box-sizing: border-box; }
.title { display: flex; align-items: center; height: 37px; background: #fff; padding-left: 9px; gap: 5px; flex: none; }
.title h1 { flex: 1; margin: 0; font-size: 14px; font-weight: 400; line-height: 20px; }
.ctl { display: flex; margin-right: 1px; }
.ctl button { width: 59px; height: 36px; display: grid; place-items: center; }
.menu { display: flex; align-items: center; height: 24px; flex: none; }
.mdi { margin-left: auto; display: flex; gap: 20px; padding-right: 21px; }
.mdi i { width: 2px; height: 22px; background: #b4b4b4; }
.tools { display: flex; height: 35px; border-top: 1px solid #e2e2e2; flex: none; }
.lc, .mem { width: 191px; }
.lc b { font-weight: 400; width: 38px; height: 16px; line-height: 18px; margin-left: 5px; text-align: center; background: #000; color: #fff; padding-left: 2px; }
.lc span { padding: 0 6px; border-right: 1px solid #fff; line-height: 18px; }
.last { flex: 1; justify-content: flex-start; border-right: 0; }
.body { flex: 1; min-height: 0; display: flex; gap: 5px; padding-left: 1px; }
.main { flex: 1; min-width: 0; display: flex; flex-direction: column; }
.stage { flex: 1; min-height: 0; position: relative; display: flex; }
control-panel { position: absolute; top: 25px; right: 23px; }
`, () => `<div class="title">${ico('app')}<h1>Dlubal RSECTION | 1.02.0001 | Beispiel 2.rsc</h1><div class="ctl"><button type="button" aria-label="Minimize">${ico('min')}</button><button type="button" aria-label="Maximize">${ico('max')}</button><button type="button" aria-label="Close">${ico('close')}</button></div></div>
<div class="menu">${ico('mdi')}<menu-row items="File|Edit|View|Insert|Calculate|Tools|Options|Window|Help"></menu-row><div class="mdi"><i></i><i></i><i></i></div></div>
<div class="tools">
<tool-group>${tb('new')}${tb('open')}${tb('center')}${tb('props')}${tb('save')}${tb('print')}${car()}${tb('report')}${sep}${tb('undo')}${car('caretg')}${tb('redo')}${car('caretg')}${sep}${tb('nav', 1)}${tb('table', 1)}${tb('panel', 1)}${tb('console')}${tb('script')}</tool-group>
<tool-group>${['point', 'line', 'surface', 'opening', 'element'].map(n => tb(n) + car()).join(sep)}</tool-group>
<tool-group><step-select class="lc" label="Load case" value="N + My"><b>G</b><span>LC1</span></step-select>${sep}<step-select class="mem" label="Member" value="Member: 1"></step-select>${more}</tool-group>
<tool-group>${tb('find')}${more}</tool-group>
<tool-group>${tb('snap')}${more}</tool-group>
<tool-group class="last">${tb('calc')}${car()}${more}</tool-group>
</div>
<div class="body"><navigator-panel></navigator-panel><div class="main"><div class="stage"><stress-view></stress-view><control-panel></control-panel></div><section-properties></section-properties></div></div>
<status-bar></status-bar>`);
</script>
</body>
</html>
